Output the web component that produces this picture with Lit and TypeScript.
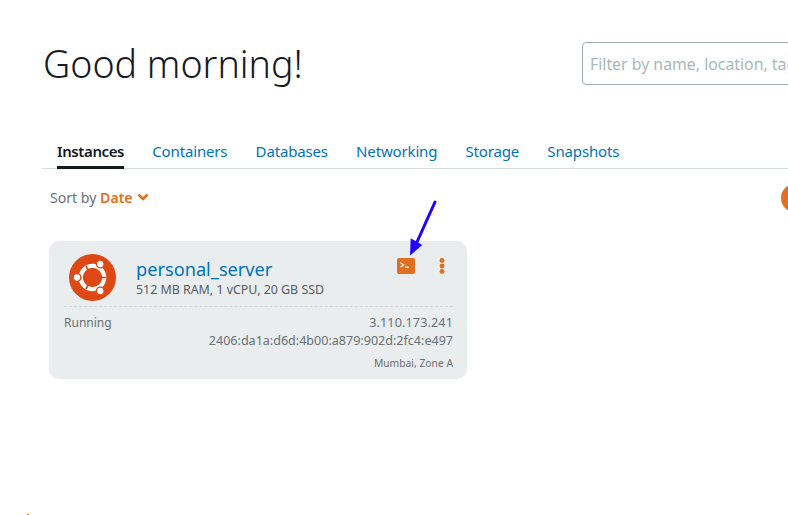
import { LitElement, html, css } from "lit";
import { customElement } from "lit/decorators.js";

@customElement("app-root")
export class AppRoot extends LitElement {
  static styles = css`
    :host { display: block; width: 788px; height: 515px; overflow: hidden; position: relative; background: #fff;
      font-family: "Noto Sans", "Open Sans", sans-serif; color: #545b64; }
    .page { display: flex; flex-direction: column; padding: 42px 0 0 0; width: 788px; box-sizing: border-box; }
    .head { display: flex; align-items: center; justify-content: space-between; padding-left: 43px; height: 43px; }
    h1 { margin: 0; font-size: 37.6px; font-weight: 300; color: #16191f; line-height: 43px; white-space: nowrap; }
    .search { flex: none; width: 300px; height: 43px; margin-right: -94px; box-sizing: border-box; border: 1px solid #9ab0b3; border-radius: 4px;
      padding: 0 7px; display: flex; align-items: center; font-size: 15.85px; color: #aab7b8; white-space: nowrap; overflow: hidden; }
    .tabs { display: flex; gap: 28.2px; margin: 50px 0 0 42px; padding-left: 15px; border-bottom: 1px solid #d5dbdb; height: 33px; box-sizing: content-box; }
    .tab { font-size: 15px; letter-spacing: -0.15px; line-height: 32px; color: #0073bb; height: 33px; box-sizing: border-box; white-space: nowrap; }
    .tab.on { color: #16191f; font-weight: 600; letter-spacing: -0.4px; border-bottom: 3px solid #16191f; margin-bottom: -1px; height: 34px; }
    .sort { display: flex; align-items: center; justify-content: space-between; margin: 15px 0 0 50px; height: 28px; }
    .sortl { display: flex; align-items: center; gap: 4px; font-size: 14.1px; color: #687078; transform: translateY(-1px); }
    .sortl b { color: #e07020; font-weight: 600; }
    .fab { width: 28px; height: 28px; border-radius: 50%; background: #e56f20; margin-right: -21px; flex: none; }
    .card { width: 418px; height: 138px; margin: 29px 0 0 49px; background: #eaeded; border-radius: 10px; box-sizing: border-box; padding: 13px 14px 0 15px; }
    .top { display: flex; height: 52px; border-bottom: 1px dashed #d5dbdb; }
    .logo { margin: 0 0 0 5px; flex: none; width: 47px; height: 47px; }
    .title { margin-left: 20px; flex: 1; padding-top: 3px; }
    .name { font-size: 18.2px; line-height: 25px; color: #0073bb; }
    .spec { font-size: 12.4px; line-height: 15px; color: #545b64; white-space: nowrap; }
    .acts { display: flex; align-items: flex-start; gap: 24px; padding: 4px 8px 0 0; }
    .acts svg { display: block; }
    .body { display: flex; justify-content: space-between; padding-top: 7px; font-size: 12px; color: #687078; line-height: 18px; }
    .ips { text-align: right; font-size: 12.55px; }
    .v4 { letter-spacing: 0.15px; }
    .zone { font-size: 10.3px; line-height: 14px; margin-top: 6px; }
    .arrow { position: absolute; left: 405px; top: 198px; }
    .speck { position: absolute; left: 27px; top: 514px; width: 2px; height: 1px; background: #e07020; }
  `;

  render() {
    const tabs = ["Containers", "Databases", "Networking", "Storage", "Snapshots"];
    return html`
      <div class="page">
        <div class="head">
          <h1>Good morning!</h1>
          <div class="search">Filter by name, location, tag, or type</div>
        </div>
        <div class="tabs">
          <div class="tab on">Instances</div>
          ${tabs.map((t) => html`<div class="tab">${t}</div>`)}
        </div>
        <div class="sort">
          <div class="sortl">
            <span>Sort by <b>Date</b></span>
            <svg width="12" height="8" viewBox="0 0 12 8"><path d="M1.5 1.5 6 6l4.5-4.5" fill="none" stroke="#e07020" stroke-width="2.6"/></svg>
          </div>
          <div class="fab"></div>
        </div>
        <div class="card">
          <div class="top">
            <svg class="logo" viewBox="0 0 46 46">
              <circle cx="23" cy="23" r="23" fill="#dd4814"/>
              <circle cx="23" cy="23" r="11.5" fill="none" stroke="#fff" stroke-width="4"/>
              <g stroke="#dd4814" stroke-width="1.6">
                <line x1="23" y1="23" x2="36" y2="23" transform="rotate(0 23 23)"/>
                <line x1="23" y1="23" x2="36" y2="23" transform="rotate(120 23 23)"/>
                <line x1="23" y1="23" x2="36" y2="23" transform="rotate(240 23 23)"/>
              </g>
              <g fill="#fff" stroke="#dd4814" stroke-width="1.4">
                <circle cx="7.8" cy="23" r="3.8"/>
                <circle cx="30.6" cy="9.8" r="3.8"/>
                <circle cx="30.6" cy="36.2" r="3.8"/>
              </g>
            </svg>
            <div class="title">
              <div class="name">personal_server</div>
              <div class="spec">512 MB RAM, 1 vCPU, 20 GB SSD</div>
            </div>
            <div class="acts">
              <svg width="18" height="16" viewBox="0 0 18 16">
                <rect width="18" height="16" rx="2" fill="#e07020"/>
                <path d="M3.5 4.8 6.8 6.9 3.5 9" fill="none" stroke="#fff" stroke-width="1.2"/>
                <path d="M8 9.2h4" stroke="#fff" stroke-width="1.2"/>
              </svg>
              <svg width="6" height="16" viewBox="0 0 6 16" fill="#e07020">
                <circle cx="3" cy="2.5" r="2.4"/><circle cx="3" cy="8" r="2.4"/><circle cx="3" cy="13.5" r="2.4"/>
              </svg>
            </div>
          </div>
          <div class="body">
            <div>Running</div>
            <div class="ips">
              <div class="v4">3.110.173.241</div>
              <div>2406:da1a:d6d:4b00:a879:902d:2fc4:e497</div>
              <div class="zone">Mumbai, Zone A</div>
            </div>
          </div>
        </div>
      </div>
      <svg class="arrow" width="34" height="60" viewBox="0 0 34 60">
        <path d="M30 4 12 44" stroke="#2200ff" stroke-width="3" stroke-linecap="round" fill="none"/>
        <path d="M5 57.5 5.7 40.3 17.3 47Z" fill="#2200ff"/>
      </svg>
      <div class="speck"></div>
    `;
  }
}
